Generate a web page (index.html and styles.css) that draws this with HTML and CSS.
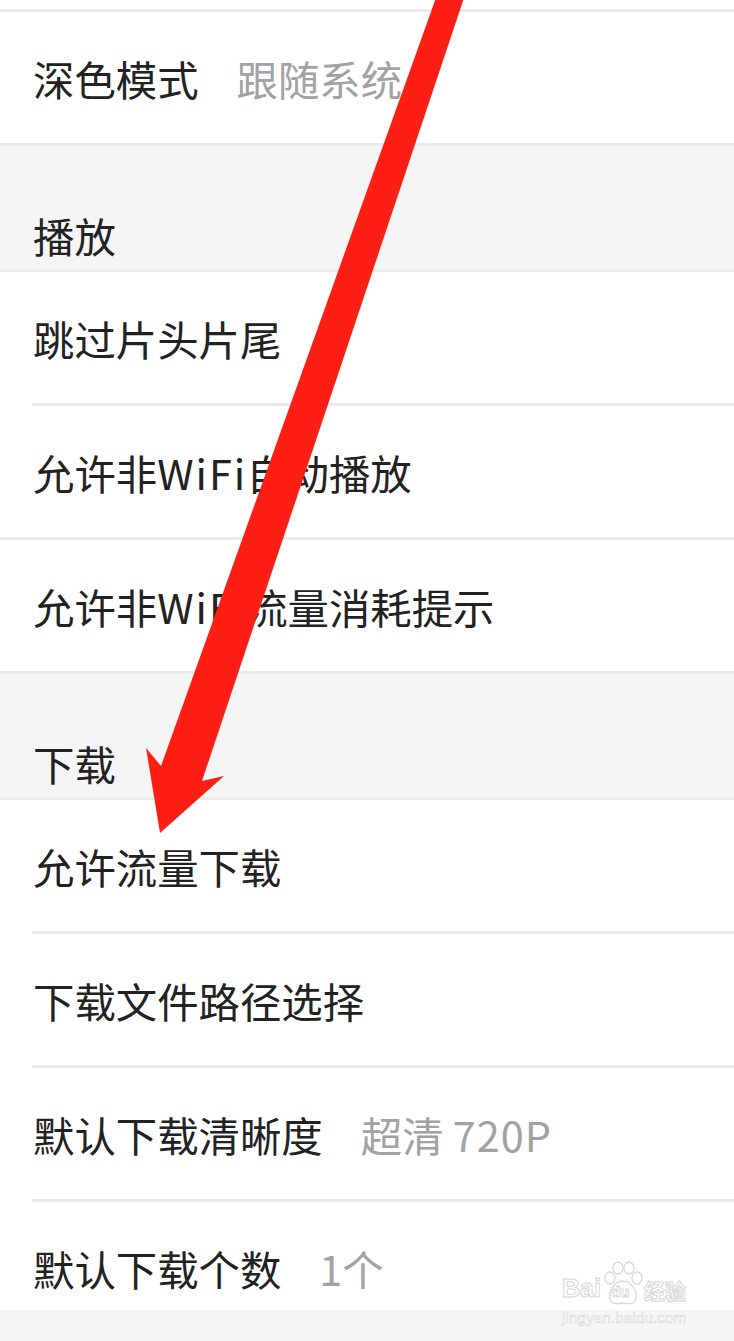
FILE: index.html
```html
<!DOCTYPE html>
<html lang="zh-CN">
<head>
<meta charset="utf-8">
<title>设置</title>
<link rel="stylesheet" href="styles.css">
</head>
<body>
<main class="settings">
  <div class="top-gap"></div>
  <div class="sep"></div>
  <div class="row"><span class="label">深色模式</span><span class="value">跟随系统</span></div>
  <div class="sep"></div>
  <div class="group-title">播放</div>
  <div class="sep"></div>
  <div class="row"><span class="label">跳过片头片尾</span></div>
  <div class="divider"></div>
  <div class="row"><span class="label">允许非<span class="latin">WiFi</span>自动播放</span></div>
  <div class="sep"></div>
  <div class="row"><span class="label">允许非<span class="latin">WiFi</span>流量消耗提示</span></div>
  <div class="sep"></div>
  <div class="group-title">下载</div>
  <div class="sep"></div>
  <div class="row"><span class="label">允许流量下载</span></div>
  <div class="divider"></div>
  <div class="row"><span class="label">下载文件路径选择</span></div>
  <div class="divider"></div>
  <div class="row"><span class="label">默认下载清晰度</span><span class="value">超清 <span class="num">720P</span></span></div>
  <div class="divider"></div>
  <div class="row row-last"><span class="label">默认下载个数</span><span class="value">1个</span></div>
  <div class="footer"></div>
</main>

<svg class="arrow" width="734" height="1341" viewBox="0 0 734 1341" aria-hidden="true">
  <polygon points="437,-5 465,-5 202,781 224,776 160,833 146,748 161,766" fill="#fe1f14"/>
</svg>

<div class="watermark" aria-hidden="true">
  <div class="wm-top">
    <span class="wm-bai">Bai</span>
    <span class="wm-paw">
      <svg width="42" height="46" viewBox="0 0 42 46">
        <g fill="#fff" stroke="#dcdcdc" stroke-width="1.4">
          <ellipse cx="8" cy="17" rx="5" ry="6"/>
          <ellipse cx="16" cy="7" rx="5" ry="6"/>
          <ellipse cx="27" cy="7" rx="5" ry="6"/>
          <ellipse cx="35" cy="17" rx="5" ry="6"/>
          <path d="M21 20 C12 20 6 32 8 38 C10 44 16 43 21 42 C26 43 32 44 34 38 C36 32 30 20 21 20 Z"/>
        </g>
      </svg>
      <span class="wm-du">du</span>
    </span>
    <span class="wm-jy">经验</span>
  </div>
  <div class="wm-url">jingyan.baidu.com</div>
</div>
</body>
</html>
```

FILE: styles.css
```css
* {
  box-sizing: border-box;
}

html, body {
  margin: 0;
  padding: 0;
  background: #ffffff;
}

body {
  position: relative;
  width: 734px;
  min-height: 1341px;
  overflow: hidden;
  font-family: "Noto Sans CJK SC", "Noto Sans", sans-serif;
  color: #222222;
}

.settings {
  display: flex;
  flex-direction: column;
  min-height: 1341px;
}

.top-gap {
  height: 9px;
  background: #ffffff;
}

.sep {
  height: 3px;
  background: #ebebeb;
}

.divider {
  height: 3px;
  margin-left: 32px;
  background: #ebebeb;
}

.row {
  height: 131px;
  display: flex;
  align-items: center;
  padding-left: 33px;
  background: #ffffff;
  font-size: 41.4px;
  line-height: 42px;
}

.row-last {
  height: 108px;
  align-items: flex-start;
  padding-top: 45px;
}

.label {
  color: #222222;
  white-space: nowrap;
}

.latin {
  letter-spacing: 2px;
  margin-right: -1px;
}

.value {
  margin-left: 38px;
  color: #a2a2a2;
  white-space: nowrap;
}

.num {
  letter-spacing: 1px;
}

.group-title {
  height: 123px;
  display: flex;
  align-items: flex-end;
  padding-left: 33px;
  padding-bottom: 13px;
  background: #f5f5f5;
  font-size: 41.4px;
  line-height: 42px;
  color: #222222;
}

.footer {
  flex: 1;
  background: #f5f5f5;
}

.arrow {
  position: absolute;
  left: 0;
  top: 0;
  pointer-events: none;
}

.watermark {
  position: absolute;
  left: 562px;
  top: 1261px;
  width: 134px;
  font-family: "Liberation Sans", Arial, sans-serif;
  color: #ffffff;
  pointer-events: none;
}

.wm-top {
  display: flex;
  align-items: flex-end;
  height: 46px;
}

.wm-bai {
  font-size: 25px;
  line-height: 25px;
  font-weight: bold;
  -webkit-text-stroke: 1px #d8d8d8;
  margin-bottom: 6px;
}

.wm-paw {
  position: relative;
  width: 42px;
  height: 46px;
  margin-left: 1px;
}

.wm-paw svg {
  display: block;
}

.wm-du {
  position: absolute;
  left: 9px;
  top: 23px;
  font-size: 15px;
  line-height: 15px;
  font-weight: bold;
  -webkit-text-stroke: 0.8px #d4d4d4;
}

.wm-jy {
  font-family: "Noto Sans CJK SC", sans-serif;
  font-size: 21px;
  line-height: 22px;
  font-weight: bold;
  -webkit-text-stroke: 1px #d8d8d8;
  margin-bottom: 6px;
}

.wm-url {
  margin-top: 3px;
  font-size: 15px;
  line-height: 15px;
  -webkit-text-stroke: 0.6px #d8d8d8;
  letter-spacing: 0.2px;
}
```
